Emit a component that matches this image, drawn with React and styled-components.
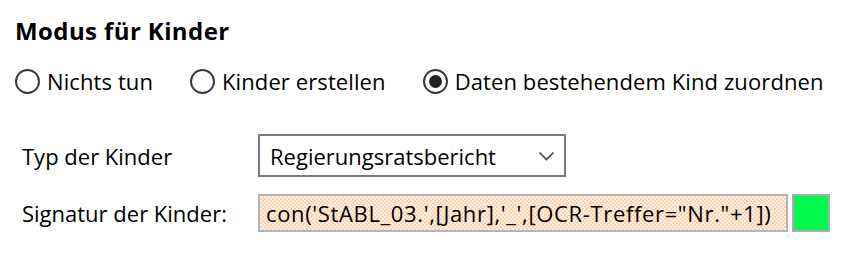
import React from "react";
import styled, { createGlobalStyle } from "styled-components";

const Global = createGlobalStyle`
  html, body { margin: 0; padding: 0; background: #ffffff; }
  body { font-family: "Open Sans", "Noto Sans", sans-serif; color: #000; }
`;

const Page = styled.div`
  width: 862px;
  height: 258px;
  box-sizing: border-box;
  padding: 14px 0 0 15px;
  font-size: 22px;
`;

const Heading = styled.div`
  font-weight: 700;
  font-size: 24px;
  line-height: 34px;
  letter-spacing: 0.4px;
`;

const RadioRow = styled.div`
  display: flex;
  align-items: center;
  margin-top: 18px;
  height: 30px;
`;

const RadioItem = styled.label`
  display: flex;
  align-items: center;
  gap: 7px;
  margin-right: ${(p) => p.$gap || 0}px;
  letter-spacing: 0.1px;
  white-space: nowrap;
`;

const Circle = styled.span`
  width: 25px;
  height: 25px;
  box-sizing: border-box;
  border: 2px solid #3a3a3a;
  border-radius: 50%;
  display: flex;
  align-items: center;
  justify-content: center;
  &::after {
    content: "";
    width: 13px;
    height: 13px;
    border-radius: 50%;
    background: #222;
    display: ${(p) => (p.$checked ? "block" : "none")};
  }
`;

const Form = styled.div`
  display: grid;
  grid-template-columns: 232px auto auto;
  justify-content: start;
  column-gap: 4px;
  row-gap: 17px;
  margin-top: 38px;
  padding-left: 7px;
  align-items: center;
`;

const Label = styled.div`
  white-space: nowrap;
`;

const Select = styled.div`
  grid-column: 2 / 4;
  width: 308px;
  height: 43px;
  box-sizing: border-box;
  border: 2px solid #7a7a7a;
  display: flex;
  align-items: center;
  justify-content: space-between;
  padding: 0 9px 0 10px;
  background: #fff;
`;

const Input = styled.div`
  width: 530px;
  height: 38px;
  box-sizing: border-box;
  border: 2px solid #b4b4b4;
  display: flex;
  align-items: center;
  padding: 0 6px;
  letter-spacing: 0.65px;
  white-space: nowrap;
  overflow: hidden;
  background: repeating-conic-gradient(#fdd3b3 0% 25%, #fff0e2 0% 50%) 0 0 / 4px 4px;
`;

const Swatch = styled.div`
  width: 38px;
  height: 38px;
  box-sizing: border-box;
  border: 2px solid #b0a8b8;
  background: #00f94c;
`;

export default function App() {
  return (
    <Page>
      <Global />
      <Heading>Modus für Kinder</Heading>
      <RadioRow>
        <RadioItem $gap={37}>
          <Circle />
          Nichts tun
        </RadioItem>
        <RadioItem $gap={37}>
          <Circle />
          Kinder erstellen
        </RadioItem>
        <RadioItem>
          <Circle $checked />
          Daten bestehendem Kind zuordnen
        </RadioItem>
      </RadioRow>
      <Form>
        <Label>Typ der Kinder</Label>
        <Select>
          <span>Regierungsratsbericht</span>
          <svg width="17" height="10" viewBox="0 0 17 10">
            <path d="M1.5 1.5 L8.5 8.5 L15.5 1.5" fill="none" stroke="#444" strokeWidth="1.6" />
          </svg>
        </Select>
        <Label>Signatur der Kinder:</Label>
        <Input>con('StABL_03.',[Jahr],'_',[OCR-Treffer="Nr."+1])</Input>
        <Swatch />
      </Form>
    </Page>
  );
}
